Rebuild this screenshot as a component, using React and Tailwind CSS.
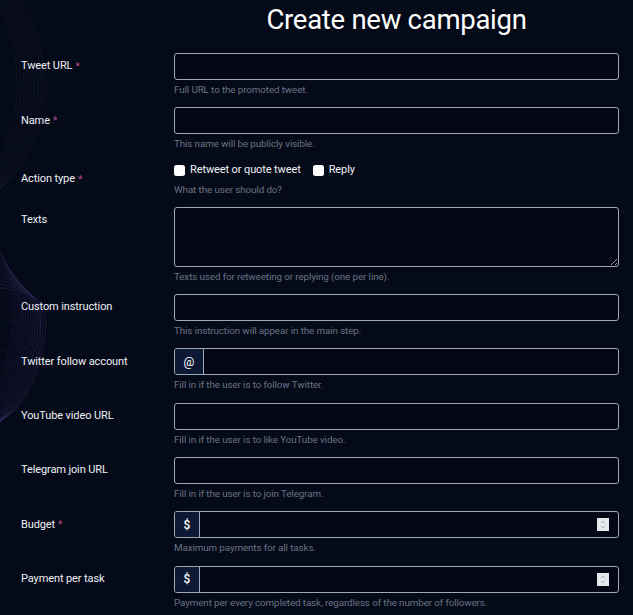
import React from "react";

const FONT = "font-['Roboto','Noto_Sans',sans-serif]";

function Label({ text, required, className = "" }) {
  return (
    <div className={"w-[153px] shrink-0 h-[27px] flex items-center text-[11px] text-[#eef0f4] tracking-[-0.01em] " + className}>
      <span>{text}</span>
      {required && <span className="ml-[3px] text-[#b3508c] text-[10px]">*</span>}
    </div>
  );
}

function Help({ children }) {
  return <div className="mt-[3px] text-[9.8px] leading-[14px] text-[#6a7284] tracking-[-0.01em]">{children}</div>;
}

function Row({ label, required, help, children, labelClass }) {
  return (
    <div className="flex mb-[10.3px]">
      <Label text={label} required={required} className={labelClass} />
      <div className="flex-1 min-w-0">
        {children}
        <Help>{help}</Help>
      </div>
    </div>
  );
}

function TextInput() {
  return (
    <input
      type="text"
      className="block w-full h-[27px] rounded-[3px] border border-[#a1a8b6] bg-[#040816] outline-none px-2 text-white text-[11px]"
    />
  );
}

function Spinner() {
  return (
    <div className="w-[12px] h-[13px] bg-[#e6e8ec] flex flex-col items-center justify-center mr-[9px]">
      <svg width="6" height="9" viewBox="0 0 6 9" fill="none" stroke="#9aa0aa" strokeWidth="0.9">
        <path d="M1 3.2 L3 1.2 L5 3.2" />
        <path d="M1 5.8 L3 7.8 L5 5.8" />
      </svg>
    </div>
  );
}

function AddonInput({ addon, addonW, spinner }) {
  return (
    <div className="flex items-center h-[27px] rounded-[3px] border border-[#a1a8b6] bg-[#040816] overflow-hidden">
      <div className={"h-full flex items-center justify-center bg-[#0d1834] border-r border-[#a1a8b6] text-white " + addonW}>
        {addon}
      </div>
      <input type="text" className="flex-1 min-w-0 h-full bg-transparent outline-none px-2 text-white text-[11px]" />
      {spinner && <Spinner />}
    </div>
  );
}

function Checkbox({ label }) {
  return (
    <div className="flex items-center">
      <span className="w-[11px] h-[11px] rounded-[2.5px] bg-white mr-[5px]" />
      <span className="text-[11px] text-[#f0f2f5] tracking-[-0.01em]">{label}</span>
    </div>
  );
}

function Decoration() {
  const top = [];
  for (let i = 0; i < 9; i++) {
    const b = 10 + i * 3.5;
    top.push(
      <path
        key={"t" + i}
        d={`M ${-4 + i * 3} -5 C ${b + 6} 40, ${b + 14} 90, ${b} 130 S ${-6} 200, -10 ${215 - i * 3}`}
        stroke="#6f7690"
        strokeOpacity="0.16"
        strokeWidth="0.5"
        fill="none"
      />
    );
  }
  const mesh = [];
  for (let i = 0; i < 14; i++) {
    const x = 12 + i * 2.6;
    mesh.push(
      <path
        key={"m" + i}
        d={`M -10 ${235 + i * 4} C ${x} ${265 + i * 2}, ${x + 8} ${305}, ${x - 6} ${360} S ${-2} ${425}, -10 ${455 - i * 3}`}
        stroke={i % 2 ? "#7a4cb8" : "#6a5a9e"}
        strokeOpacity={0.18 + i * 0.015}
        strokeWidth="0.55"
        fill="none"
      />
    );
  }
  for (let i = 0; i < 10; i++) {
    mesh.push(
      <path
        key={"c" + i}
        d={`M -10 ${255 + i * 12} C 20 ${275 + i * 10}, 44 ${305 + i * 4}, 40 ${325 + i * 2}`}
        stroke="#7d4fbf"
        strokeOpacity="0.16"
        strokeWidth="0.5"
        fill="none"
      />
    );
  }
  return (
    <svg className="absolute left-0 top-0 pointer-events-none" width="120" height="615" viewBox="0 0 120 615">
      {top}
      {mesh}
    </svg>
  );
}

export default function App() {
  return (
    <div className={"relative w-full min-h-[615px] bg-[#050a19] overflow-hidden " + FONT}>
      <Decoration />
      <div className="relative pl-[21px] pr-[14px]">
        <div className="ml-[153px] h-[53px] pt-[3px] text-center text-[27.5px] leading-[34px] text-white tracking-[-0.01em]">
          Create new campaign
        </div>

        <Row label="Tweet URL" required help="Full URL to the promoted tweet.">
          <TextInput />
        </Row>
        <Row label="Name" required help="This name will be publicly visible.">
          <TextInput />
        </Row>
        <div className="flex mb-[10.3px]">
          <Label text="Action type" required className="h-[18px] mt-[4px]" />
          <div className="flex-1">
            <div className="h-[18px] flex items-center gap-[12px]">
              <Checkbox label="Retweet or quote tweet" />
              <Checkbox label="Reply" />
            </div>
            <Help>What the user should do?</Help>
          </div>
        </div>
        <Row label="Texts" help="Texts used for retweeting or replying (one per line).">
          <textarea className="block w-full h-[60px] rounded-[3px] border border-[#a1a8b6] bg-[#040816] outline-none px-2 text-white text-[11px] resize-y" />
        </Row>
        <Row label="Custom instruction" help="This instruction will appear in the main step.">
          <TextInput />
        </Row>
        <Row label="Twitter follow account" help="Fill in if the user is to follow Twitter.">
          <AddonInput addon={<span className="text-[12px]">@</span>} addonW="w-[29px]" />
        </Row>
        <Row label="YouTube video URL" help="Fill in if the user is to like YouTube video.">
          <TextInput />
        </Row>
        <Row label="Telegram join URL" help="Fill in if the user is to join Telegram.">
          <TextInput />
        </Row>
        <Row label="Budget" required help="Maximum payments for all tasks.">
          <AddonInput addon={<span className="text-[12px] font-medium">$</span>} addonW="w-[25px]" spinner />
        </Row>
        <Row label="Payment per task" help="Payment per every completed task, regardless of the number of followers.">
          <AddonInput addon={<span className="text-[12px] font-medium">$</span>} addonW="w-[25px]" spinner />
        </Row>
      </div>
    </div>
  );
}
